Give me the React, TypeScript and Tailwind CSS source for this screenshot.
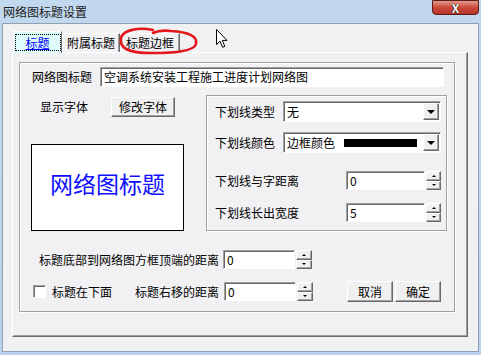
import React from "react";

const raised =
  "bg-[#f0f0f0] border border-t-white border-l-white border-r-[#696969] border-b-[#696969] shadow-[inset_-1px_-1px_0_#a0a0a0]";
const sunken =
  "bg-white border border-t-[#a0a0a0] border-l-[#a0a0a0] border-r-white border-b-white shadow-[inset_1px_1px_0_#696969]";
const etched =
  "border border-[#a0a0a0] shadow-[1px_1px_0_#ffffff,inset_1px_1px_0_#ffffff]";

const Spin = ({ w }: { w: string }) => (
  <div className={`flex flex-col h-full ml-[1px] ${w}`}>
    <div className={`flex-1 flex items-center justify-center ${raised}`}>
      <div className="w-0 h-0 border-l-[2px] border-r-[2px] border-b-[2px] border-l-transparent border-r-transparent border-b-black" />
    </div>
    <div className={`flex-1 flex items-center justify-center ${raised}`}>
      <div className="w-0 h-0 border-l-[2px] border-r-[2px] border-t-[2px] border-l-transparent border-r-transparent border-t-black" />
    </div>
  </div>
);

const NumberBox = ({ value, w, spinW }: { value: string; w: string; spinW: string }) => (
  <div className="flex h-[19px]">
    <div className={`${sunken} ${w} h-full pl-[3px] flex items-center text-[12px] leading-none`}>
      {value}
    </div>
    <Spin w={spinW} />
  </div>
);

const Select = ({ children }: { children: React.ReactNode }) => (
  <div className={`${sunken} w-[158px] h-[21px] flex items-center pl-[3px] pr-[1px]`}>
    <div className="flex-1 flex items-center text-[12px] leading-none">{children}</div>
    <div className={`${raised} w-[16px] h-[17px] flex items-center justify-center`}>
      <div className="w-0 h-0 border-l-[4px] border-r-[4px] border-t-[4px] border-l-transparent border-r-transparent border-t-black" />
    </div>
  </div>
);

const Tab = ({ label, w, active }: { label: string; w: string; active?: boolean }) =>
  active ? (
    <div
      className={`${w} h-[22px] -mb-px z-10 relative bg-[#defcfb] border-t border-l border-t-white border-l-white border-r border-r-[#696969] flex items-start justify-center pt-[2px]`}
    >
      <div className="border border-dotted border-black w-[46px] h-[17px] flex items-center justify-center text-[#0000ff] underline text-[12px] leading-none">
        {label}
      </div>
    </div>
  ) : (
    <div
      className={`${w} h-[19px] border-t border-l border-t-white border-l-white border-r border-r-[#696969] shadow-[inset_-1px_0_0_#a0a0a0] flex items-center justify-center text-[12px] leading-none`}
    >
      {label}
    </div>
  );

export default function App() {
  return (
    <div
      className="relative w-[481px] h-[355px] overflow-hidden bg-gradient-to-b from-[#c2d8ee] to-[#b9d1ea] text-black"
      style={{ fontFamily: '"Noto Sans CJK SC", "Noto Sans", sans-serif' }}
    >
      {/* title bar */}
      <div className="h-[23px] flex items-center pl-[3px] text-[12px] text-[#1a1a1a]">
        网络图标题设置
      </div>
      <div className="absolute right-[2px] top-0 w-[47px] h-[15px] rounded-b-[4px] border border-[#5a1d17] bg-gradient-to-b from-[#e49a8f] via-[#c9493a] to-[#b8352a] flex items-center justify-center">
        <span className="text-white font-bold text-[12px] leading-none [text-shadow:0_0_1px_#000,0_0_1px_#000]">
          X
        </span>
      </div>

      {/* window body */}
      <div className="ml-[2px] w-[477px] h-[329px] bg-[#f1f0f3] border border-[#8fa0b3]">
        {/* tabs */}
        <div className="mt-[7px] ml-[10px] flex items-end h-[21px]">
          <Tab label="标题" w="w-[49px]" active />
          <Tab label="附属标题" w="w-[58px]" />
          <Tab label="标题边框" w="w-[60px]" />
        </div>

        {/* tab panel */}
        <div className="ml-[9px] w-[456px] h-[285px] border border-t-white border-l-white border-r-[#696969] border-b-[#696969] shadow-[inset_-1px_-1px_0_#a0a0a0]">
          <div className={`ml-[6px] mt-[9px] w-[436px] h-[250px] ${etched} text-[12px] leading-none`}>
            {/* title input */}
            <div className="mt-[4px] flex items-center h-[20px]">
              <span className="ml-[12px] w-[60px]">网络图标题</span>
              <div className={`${sunken} ml-[8px] w-[344px] h-full flex items-center pl-[3px]`}>
                空调系统安装工程施工进度计划网络图
              </div>
            </div>

            <div className="mt-[8px] flex">
              {/* left column */}
              <div className="w-[186px]">
                <div className="mt-[2px] flex items-center h-[20px]">
                  <span className="ml-[20px] w-[48px] shrink-0">显示字体</span>
                  <div className={`${raised} ml-[23px] w-[64px] h-full flex items-center justify-center`}>
                    修改字体
                  </div>
                </div>
                <div className="mt-[27px] ml-[11px] w-[153px] h-[87px] bg-white border border-black flex items-center justify-center pb-[8px]">
                  <span className="text-[23px] leading-none text-[#1010ff]">网络图标题</span>
                </div>
              </div>

              {/* underline group */}
              <div className={`w-[241px] h-[136px] ${etched}`}>
                <div className="mt-[5px] flex items-center h-[21px]">
                  <span className="ml-[8px] w-[68px]">下划线类型</span>
                  <Select>无</Select>
                </div>
                <div className="mt-[10px] flex items-center h-[21px]">
                  <span className="ml-[8px] w-[68px]">下划线颜色</span>
                  <Select>
                    <span>边框颜色</span>
                    <span className="ml-[9px] w-[73px] h-[8px] bg-black" />
                  </Select>
                </div>
                <div className="mt-[18px] flex items-center h-[19px]">
                  <span className="ml-[8px] w-[131px]">下划线与字距离</span>
                  <NumberBox value="0" w="w-[79px]" spinW="w-[15px]" />
                </div>
                <div className="mt-[13px] flex items-center h-[19px]">
                  <span className="ml-[8px] w-[131px]">下划线长出宽度</span>
                  <NumberBox value="5" w="w-[79px]" spinW="w-[15px]" />
                </div>
              </div>
            </div>

            {/* distance row */}
            <div className="mt-[19px] flex items-center h-[19px]">
              <span className="ml-[19px] w-[184px]">标题底部到网络图方框顶端的距离</span>
              <NumberBox value="0" w="w-[72px]" spinW="w-[16px]" />
            </div>

            {/* bottom row */}
            <div className="mt-[12px] flex items-center h-[21px]">
              <div className={`${sunken} ml-[13px] w-[13px] h-[13px]`} />
              <span className="ml-[6px] w-[83px]">标题在下面</span>
              <span className="w-[89px]">标题右移的距离</span>
              <NumberBox value="0" w="w-[72px]" spinW="w-[16px]" />
              <div className={`${raised} ml-[34px] w-[46px] h-[21px] flex items-center justify-center`}>
                取消
              </div>
              <div className={`${raised} ml-[2px] w-[46px] h-[21px] flex items-center justify-center`}>
                确定
              </div>
            </div>
          </div>
        </div>
      </div>

      {/* red annotation */}
      <svg className="absolute left-[116px] top-[24px]" width="86" height="34" viewBox="0 0 86 34">
        <path
          d="M37 6 C 22 3, 7 6, 5 14 C 3 24, 12 29, 35 29 C 55 29, 78 28, 80 20 C 82 12, 72 8, 55 7 C 47 6, 41 7, 37 9"
          fill="none"
          stroke="#e2161c"
          strokeWidth="2.6"
          strokeLinecap="round"
        />
      </svg>

      {/* mouse cursor */}
      <svg className="absolute left-[216px] top-[29px]" width="13" height="20" viewBox="0 0 13 20">
        <path
          d="M0.5 0.5 L0.5 15.5 L4 12.2 L6.6 18.3 L8.8 17.4 L6.3 11.4 L11 11.4 Z"
          fill="#ffffff"
          stroke="#000000"
          strokeWidth="1"
          strokeLinejoin="miter"
        />
      </svg>
    </div>
  );
}
